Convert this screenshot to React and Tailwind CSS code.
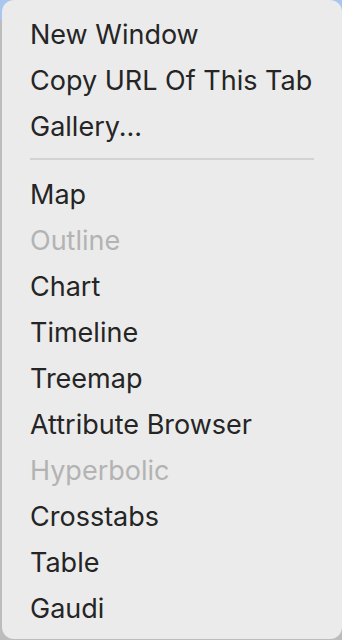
export default function App() {
  const top = [
    { t: "New Window" },
    { t: "Copy URL Of This Tab" },
    { t: "Gallery..." },
  ];
  const bottom = [
    { t: "Map" },
    { t: "Outline", d: true },
    { t: "Chart" },
    { t: "Timeline" },
    { t: "Treemap" },
    { t: "Attribute Browser" },
    { t: "Hyperbolic", d: true },
    { t: "Crosstabs" },
    { t: "Table" },
    { t: "Gaudi" },
  ];
  const Row = ({ t, d }) => (
    <div
      className={`h-[46px] flex items-center pl-[28px] text-[27px] leading-none ${d ? "text-[#b3b3b3]" : "text-[#252525]"}`}
    >
      {t}
    </div>
  );
  return (
    <div
      className="w-[342px] h-[640px] bg-[#bcbcbc] overflow-hidden relative"
      style={{ fontFamily: "Inter, 'Noto Sans', sans-serif" }}
    >
      <div className="absolute left-0 top-0 w-[342px] h-[20px] bg-[#a9c6ee]" />
      <div className="relative ml-[2px] h-[639px] bg-[#ebebeb] rounded-[12px] pt-[11px] overflow-hidden">
        {top.map((r) => (
          <Row key={r.t} {...r} />
        ))}
        <div className="mt-[9px] mb-[11px] ml-[28px] mr-[28px] h-[2px] bg-[#d3d3d3]" />
        {bottom.map((r) => (
          <Row key={r.t} {...r} />
        ))}
      </div>
    </div>
  );
}
